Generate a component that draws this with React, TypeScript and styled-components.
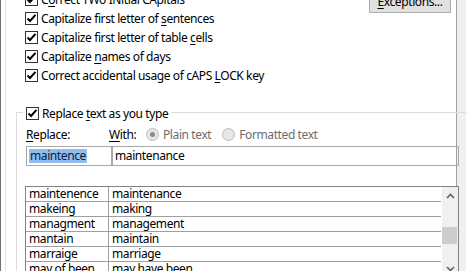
import React from "react";
import styled, { createGlobalStyle } from "styled-components";

const Global = createGlobalStyle`
  html, body { margin: 0; padding: 0; background: #f0f0f0; }
  body { font-family: "Noto Sans", "Segoe UI", sans-serif; font-size: 12px; letter-spacing: -0.4px; color: #000; }
`;

const Screen = styled.div`
  width: 466px;
  height: 271px;
  overflow: hidden;
  display: flex;
  background: #f0f0f0;
`;

const Page = styled.div`
  width: 455px;
  flex: none;
  height: 100%;
  background: #fff;
  border-left: 1px solid #6e6e6e;
  border-right: 1px solid #a0a0a0;
  display: flex;
`;

const Inner = styled.div`
  margin-left: 4px;
  border-left: 1px solid #e3e3e3;
  flex: 1;
  display: flex;
  flex-direction: column;
  min-width: 0;
`;

const Top = styled.div`
  display: flex;
  justify-content: space-between;
  margin-top: -10px;
  padding-left: 19px;
  padding-right: 5px;
`;

const OptionList = styled.div`
  display: flex;
  flex-direction: column;
`;

const Row = styled.label`
  display: flex;
  align-items: center;
  height: 19px;
  gap: 3px;
  white-space: nowrap;
  line-height: 16px;
`;

const Box = styled.span`
  width: 11px;
  height: 11px;
  border: 1px solid #333;
  background: #fff;
  display: inline-flex;
  align-items: center;
  justify-content: center;
  flex: none;
`;

const U = styled.span`
  text-decoration: underline;
  text-underline-offset: 2px;
`;

const Button = styled.div`
  width: 80px;
  height: 21px;
  border: 1px solid #adadad;
  background: #e1e1e1;
  display: flex;
  align-items: center;
  justify-content: center;
  line-height: 16px;
`;

const Group = styled.div`
  margin: 27px 0 0 10px;
  width: 433px;
  flex: 1;
  border: 1px solid #dcdcdc;
  border-bottom: none;
  padding: 0 7px 0 9px;
  display: flex;
  flex-direction: column;
`;

const Legend = styled.div`
  align-self: flex-start;
  margin: -9px 0 0 -3px;
  padding: 0 3px;
  background: #fff;
`;

const Labels = styled.div`
  display: flex;
  align-items: center;
  height: 21px;
  margin-top: 1px;
  white-space: nowrap;
`;

const Label = styled.span<{ $w?: number }>`
  width: ${(p) => (p.$w ? `${p.$w}px` : "auto")};
  flex: none;
`;

const RadioItem = styled.span<{ $gap: number }>`
  display: inline-flex;
  align-items: center;
  gap: 4px;
  color: #6d6d6d;
  margin-right: ${(p) => p.$gap}px;
`;

const Radio = styled.span<{ $on?: boolean }>`
  width: 11px;
  height: 11px;
  border-radius: 50%;
  border: 1px solid #bcbcbc;
  background: #e6e6e6;
  display: inline-flex;
  align-items: center;
  justify-content: center;
  &::after {
    content: "";
    width: 5px;
    height: 5px;
    border-radius: 50%;
    background: ${(p) => (p.$on ? "#8a8a8a" : "transparent")};
  }
`;

const Fields = styled.div`
  display: flex;
  height: 20px;
  margin-top: 1px;
`;

const Field = styled.div<{ $w?: number }>`
  ${(p) => (p.$w ? `width: ${p.$w}px; flex: none;` : "flex: 1;")}
  border: 1px solid #a9a9a9;
  display: flex;
  align-items: center;
  padding-left: 2px;
  line-height: 14px;
`;

const Selected = styled.span`
  background: #8fbdee;
  color: #0a1a40;
  padding: 0 1px;
`;

const Table = styled.div`
  margin-top: 20px;
  margin-left: -1px;
  border: 1px solid #828282;
  border-bottom: none;
  flex: 1;
  display: flex;
`;

const Rows = styled.div`
  flex: 1;
  display: flex;
  flex-direction: column;
`;

const TRow = styled.div`
  display: flex;
  height: 14px;
  border-bottom: 1px solid #a0a0a0;
  line-height: 14px;
`;

const Cell = styled.div<{ $first?: boolean }>`
  ${(p) => (p.$first ? "width: 79px; flex: none; border-right: 1px solid #a0a0a0;" : "flex: 1;")}
  padding-left: 3px;
  white-space: nowrap;
  overflow: hidden;
`;

const Scroll = styled.div`
  width: 16px;
  background: #f0f0f0;
  display: flex;
  flex-direction: column;
  align-items: center;
  margin-left: 1px;
`;

const Arrow = styled.div`
  height: 17px;
  display: flex;
  align-items: center;
  justify-content: center;
`;

const Track = styled.div`
  flex: 1;
  width: 100%;
  display: flex;
  flex-direction: column;
`;

const Thumb = styled.div`
  margin-top: 23px;
  height: 17px;
  width: 15px;
  background: #cdcdcd;
`;

const Check = () => (
  <svg width="11" height="11" viewBox="0 0 11 11">
    <path d="M1.5 5.5 L4 8 L9.5 1.8" fill="none" stroke="#000" strokeWidth="2" />
  </svg>
);

const CheckBox = () => (
  <Box>
    <Check />
  </Box>
);

const Chevron = ({ down }: { down?: boolean }) => (
  <svg width="9" height="6" viewBox="0 0 9 6">
    <path
      d={down ? "M1 1 L4.5 4.5 L8 1" : "M1 5 L4.5 1.5 L8 5"}
      fill="none"
      stroke="#606060"
      strokeWidth="1.6"
    />
  </svg>
);

const entries: [string, string][] = [
  ["maintenence", "maintenance"],
  ["makeing", "making"],
  ["managment", "management"],
  ["mantain", "maintain"],
  ["marraige", "marriage"],
  ["may of been", "may have been"],
];

export default function App() {
  return (
    <>
      <Global />
      <Screen>
        <Page>
          <Inner>
            <Top>
              <OptionList>
                <Row>
                  <CheckBox />
                  <span>
                    C<U>o</U>rrect TWo INitial CApitals
                  </span>
                </Row>
                <Row>
                  <CheckBox />
                  <span>
                    Capitalize first letter of <U>s</U>entences
                  </span>
                </Row>
                <Row>
                  <CheckBox />
                  <span>
                    Capitalize first letter of table <U>c</U>ells
                  </span>
                </Row>
                <Row>
                  <CheckBox />
                  <span>
                    Capitalize <U>n</U>ames of days
                  </span>
                </Row>
                <Row>
                  <CheckBox />
                  <span>
                    Correct accidental usage of cAPS <U>L</U>OCK key
                  </span>
                </Row>
              </OptionList>
              <Button>
                <span>
                  <U>E</U>xceptions...
                </span>
              </Button>
            </Top>
            <Group>
              <Legend>
                <Row>
                  <CheckBox />
                  <span>
                    Replace <U>t</U>ext as you type
                  </span>
                </Row>
              </Legend>
              <Labels>
                <Label $w={83}>
                  <U>R</U>eplace:
                </Label>
                <Label $w={37}>
                  <U>W</U>ith:
                </Label>
                <RadioItem $gap={11}>
                  <Radio $on />
                  Plain text
                </RadioItem>
                <RadioItem $gap={0}>
                  <Radio />
                  Formatted text
                </RadioItem>
              </Labels>
              <Fields>
                <Field $w={82}>
                  <Selected>maintence</Selected>
                </Field>
                <Field>maintenance</Field>
              </Fields>
              <Table>
                <Rows>
                  {entries.map(([a, b]) => (
                    <TRow key={a}>
                      <Cell $first>{a}</Cell>
                      <Cell>{b}</Cell>
                    </TRow>
                  ))}
                </Rows>
                <Scroll>
                  <Arrow>
                    <Chevron />
                  </Arrow>
                  <Track>
                    <Thumb />
                  </Track>
                  <Arrow>
                    <Chevron down />
                  </Arrow>
                </Scroll>
              </Table>
            </Group>
          </Inner>
        </Page>
      </Screen>
    </>
  );
}
